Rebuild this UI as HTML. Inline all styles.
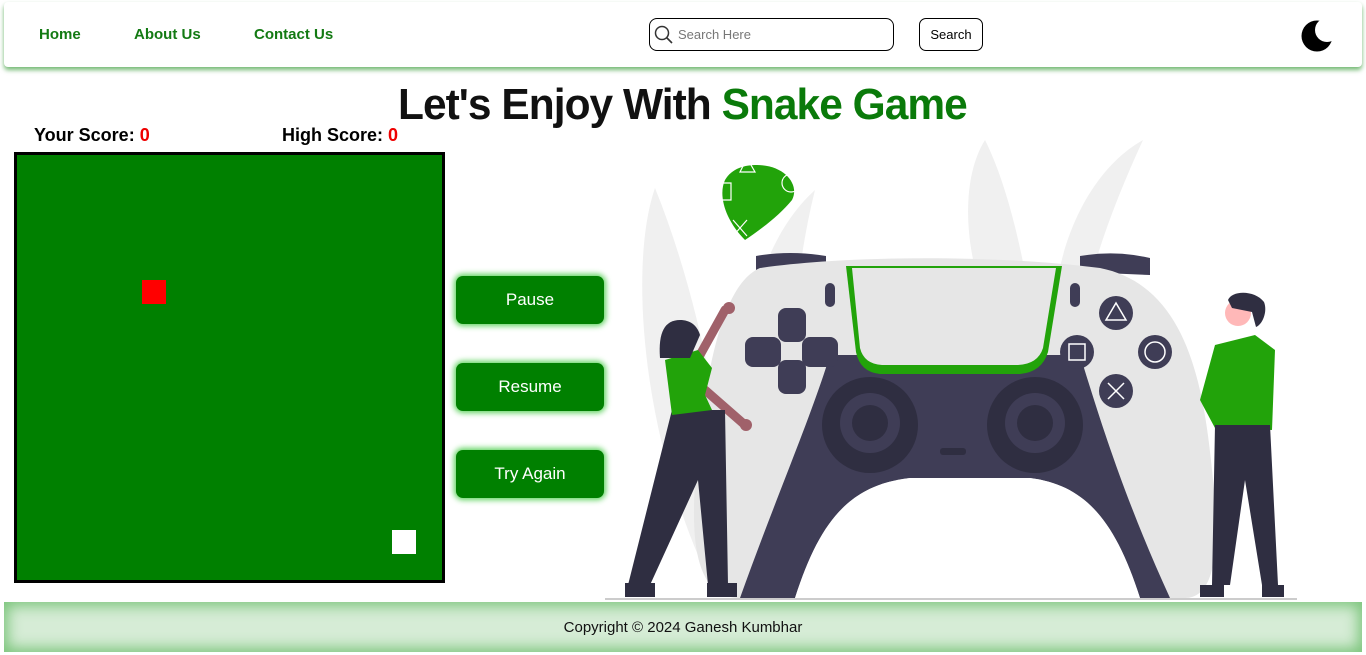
<!DOCTYPE html>
<html><head><meta charset="utf-8"><style>
*{margin:0;padding:0;box-sizing:border-box}
body{width:1366px;height:655px;background:#fff;position:relative;overflow:hidden;font-family:"Liberation Sans",sans-serif}
.hdr{position:absolute;left:4px;top:2px;width:1358px;height:65px;background:#fff;box-shadow:0 3px 5px rgba(0,128,0,.55);border-radius:4px}
.nav{position:absolute;top:26px;font-weight:bold;font-size:15px;color:#137a13}
.srch{position:absolute;left:649px;top:18px;width:245px;height:33px;border:1.3px solid #000;border-radius:8px}
.srch span{position:absolute;left:28px;top:8px;font-size:13px;color:#777}
.sbtn{position:absolute;left:919px;top:18px;width:64px;height:33px;border:1.3px solid #000;border-radius:7px;font-size:13px;text-align:center;line-height:31px}
h1{position:absolute;left:398px;top:80px;font-size:44px;font-weight:bold;letter-spacing:-1px;transform:scaleX(.965);transform-origin:left;white-space:nowrap;color:#111}
h1 b{color:#0a7a0a}
.sc{position:absolute;top:125px;font-weight:bold;font-size:18px}
.sc b{color:#e00}
.board{position:absolute;left:14px;top:152px;width:431px;height:431px;background:#008000;border:3px solid #000}
.btn{position:absolute;left:456px;width:148px;height:48px;background:#008000;border-radius:7px;color:#fff;font-size:17px;text-align:center;line-height:48px;box-shadow:0 0 6px 2px #5fd35f}
.ftr{position:absolute;left:4px;top:602px;width:1358px;height:50px;background:#d6ecd6;box-shadow:inset 0 0 14px 4px #7cc57c;text-align:center;line-height:52px;font-size:15px;color:#111}
</style></head><body>
<div class="hdr"></div>
<div class="nav" style="left:39px">Home</div>
<div class="nav" style="left:134px">About Us</div>
<div class="nav" style="left:254px">Contact Us</div>
<div class="srch"><svg style="position:absolute;left:4px;top:6px" width="20" height="20" viewBox="0 0 20 20"><circle cx="8" cy="8" r="6.5" fill="none" stroke="#333" stroke-width="1.5"/><path d="M12.5 12.5L18 18" stroke="#333" stroke-width="1.6"/></svg><span>Search Here</span></div>
<div class="sbtn">Search</div>
<svg style="position:absolute;left:1300px;top:18px" width="36" height="36" viewBox="0 0 36 36"><defs><mask id="m"><rect width="36" height="36" fill="#fff"/><circle cx="27" cy="12" r="12" fill="#000"/></mask></defs><circle cx="17" cy="18" r="15.5" fill="#000" mask="url(#m)"/></svg>
<h1>Let's Enjoy With <b>Snake Game</b></h1>
<div class="sc" style="left:34px">Your Score: <b>0</b></div>
<div class="sc" style="left:282px">High Score: <b>0</b></div>
<div class="board"><div style="position:absolute;left:125px;top:125px;width:24px;height:24px;background:#f00"></div><div style="position:absolute;left:375px;top:375px;width:24px;height:24px;background:#fff"></div></div>
<div class="btn" style="top:276px">Pause</div>
<div class="btn" style="top:363px">Resume</div>
<div class="btn" style="top:450px">Try Again</div>
<svg style="position:absolute;left:0;top:0" width="1366" height="655" viewBox="0 0 1366 655">
<g fill="#f0f0f0">
<path d="M655 188C630 260 640 420 700 560L740 560C720 420 700 300 655 188Z"/>
<path d="M815 190C760 240 740 330 745 420L790 420C790 330 800 250 815 190Z"/>
<path d="M985 140C960 180 965 250 985 300L1030 300C1020 240 1005 180 985 140Z"/>
<path d="M1143 140C1090 170 1060 240 1055 300L1085 300C1100 240 1120 190 1143 140Z"/>
</g>
<path d="M757 165C785 165 800 185 792 200C780 215 760 230 745 240C725 220 718 195 725 180C732 168 745 165 757 165Z" fill="#22a30a"/>
<path d="M747 158L755 172L740 172Z M718 183h13v17h-13Z M733 220L747 236M747 220L733 236" fill="none" stroke="#fff" stroke-width="1.2"/>
<circle cx="791" cy="183" r="9" fill="none" stroke="#fff" stroke-width="1.2"/>
<path d="M756 256Q790 250 826 256L826 272L756 272Z M1080 256Q1116 250 1150 258L1150 275L1080 272Z" fill="#3f3d56"/>
<path d="M760 268C720 285 705 380 696 470C690 540 695 598 740 598L1185 598C1218 598 1220 540 1212 470C1203 380 1185 285 1100 268C1000 255 850 255 760 268Z" fill="#e6e6e6"/>
<path d="M830 355L1080 355C1100 420 1125 500 1170 598L1140 598C1115 520 1085 485 1030 478L910 478C850 485 820 520 795 598L740 598C775 500 810 420 830 355Z" fill="#3f3d56"/>
<path d="M795 598C820 520 850 485 910 478L1030 478C1085 485 1115 520 1140 598Z" fill="#fff"/>
<path d="M846 266L1062 266L1048 352Q1042 372 1020 374L880 374Q860 372 856 352Z" fill="#22a30a"/>
<path d="M852 268L1056 268L1043 348Q1038 364 1018 365L882 365Q864 364 860 348Z" fill="#e6e6e6"/>
<circle cx="870" cy="425" r="48" fill="#2f2e41"/><circle cx="870" cy="423" r="30" fill="#3f3d56"/><circle cx="870" cy="423" r="18" fill="#2f2e41"/>
<circle cx="1035" cy="425" r="48" fill="#2f2e41"/><circle cx="1035" cy="423" r="30" fill="#3f3d56"/><circle cx="1035" cy="423" r="18" fill="#2f2e41"/>
<rect x="940" y="448" width="26" height="7" rx="3" fill="#2f2e41"/>
<g fill="#3f3d56"><rect x="778" y="308" width="28" height="34" rx="8"/><rect x="778" y="360" width="28" height="34" rx="8"/><rect x="745" y="337" width="36" height="30" rx="8"/><rect x="802" y="337" width="36" height="30" rx="8"/>
<rect x="825" y="283" width="10" height="24" rx="5"/><rect x="1070" y="283" width="10" height="24" rx="5"/>
<circle cx="1116" cy="313" r="17"/><circle cx="1077" cy="352" r="17"/><circle cx="1155" cy="352" r="17"/><circle cx="1116" cy="391" r="17"/></g>
<g fill="none" stroke="#fff" stroke-width="1.5"><path d="M1116 303L1126 320L1106 320Z"/><rect x="1069" y="344" width="16" height="16"/><circle cx="1155" cy="352" r="10"/><path d="M1108 383L1124 399M1124 383L1108 399"/></g>
<line x1="605" y1="599" x2="1297" y2="599" stroke="#ccc" stroke-width="2"/>
<path d="M700 355L725 310" stroke="#a0616a" stroke-width="9" stroke-linecap="round"/><circle cx="729" cy="308" r="6" fill="#a0616a"/>
<path d="M705 390L745 425" stroke="#a0616a" stroke-width="9" stroke-linecap="round"/><circle cx="746" cy="425" r="6" fill="#a0616a"/>
<path d="M672 410L725 410L728 585L708 585L698 480L650 585L628 585Z" fill="#2f2e41"/>
<path d="M665 360L698 350L712 368L705 395L712 410L672 415Z" fill="#22a30a"/>
<path d="M680 320C665 320 658 332 660 358L690 358L700 335C697 325 690 320 680 320Z" fill="#2f2e41"/>
<path d="M625 583h30v14h-30Z M707 583h30v14h-30Z" fill="#2f2e41"/>
<circle cx="1238" cy="313" r="13" fill="#ffb8b8"/>
<path d="M1228 300C1232 290 1255 290 1264 302C1268 312 1262 325 1256 327L1252 312L1232 308Z" fill="#2f2e41"/>
<path d="M1215 345L1255 335L1275 350L1272 430L1215 428L1200 400Z" fill="#22a30a"/>
<path d="M1215 425L1270 425L1278 585L1262 585L1245 480L1230 585L1212 585Z" fill="#2f2e41"/>
<path d="M1200 585h24v12h-24Z M1262 585h22v12h-22Z" fill="#2f2e41"/>
</svg>
<div class="ftr">Copyright © 2024 Ganesh Kumbhar</div>
</body></html>
